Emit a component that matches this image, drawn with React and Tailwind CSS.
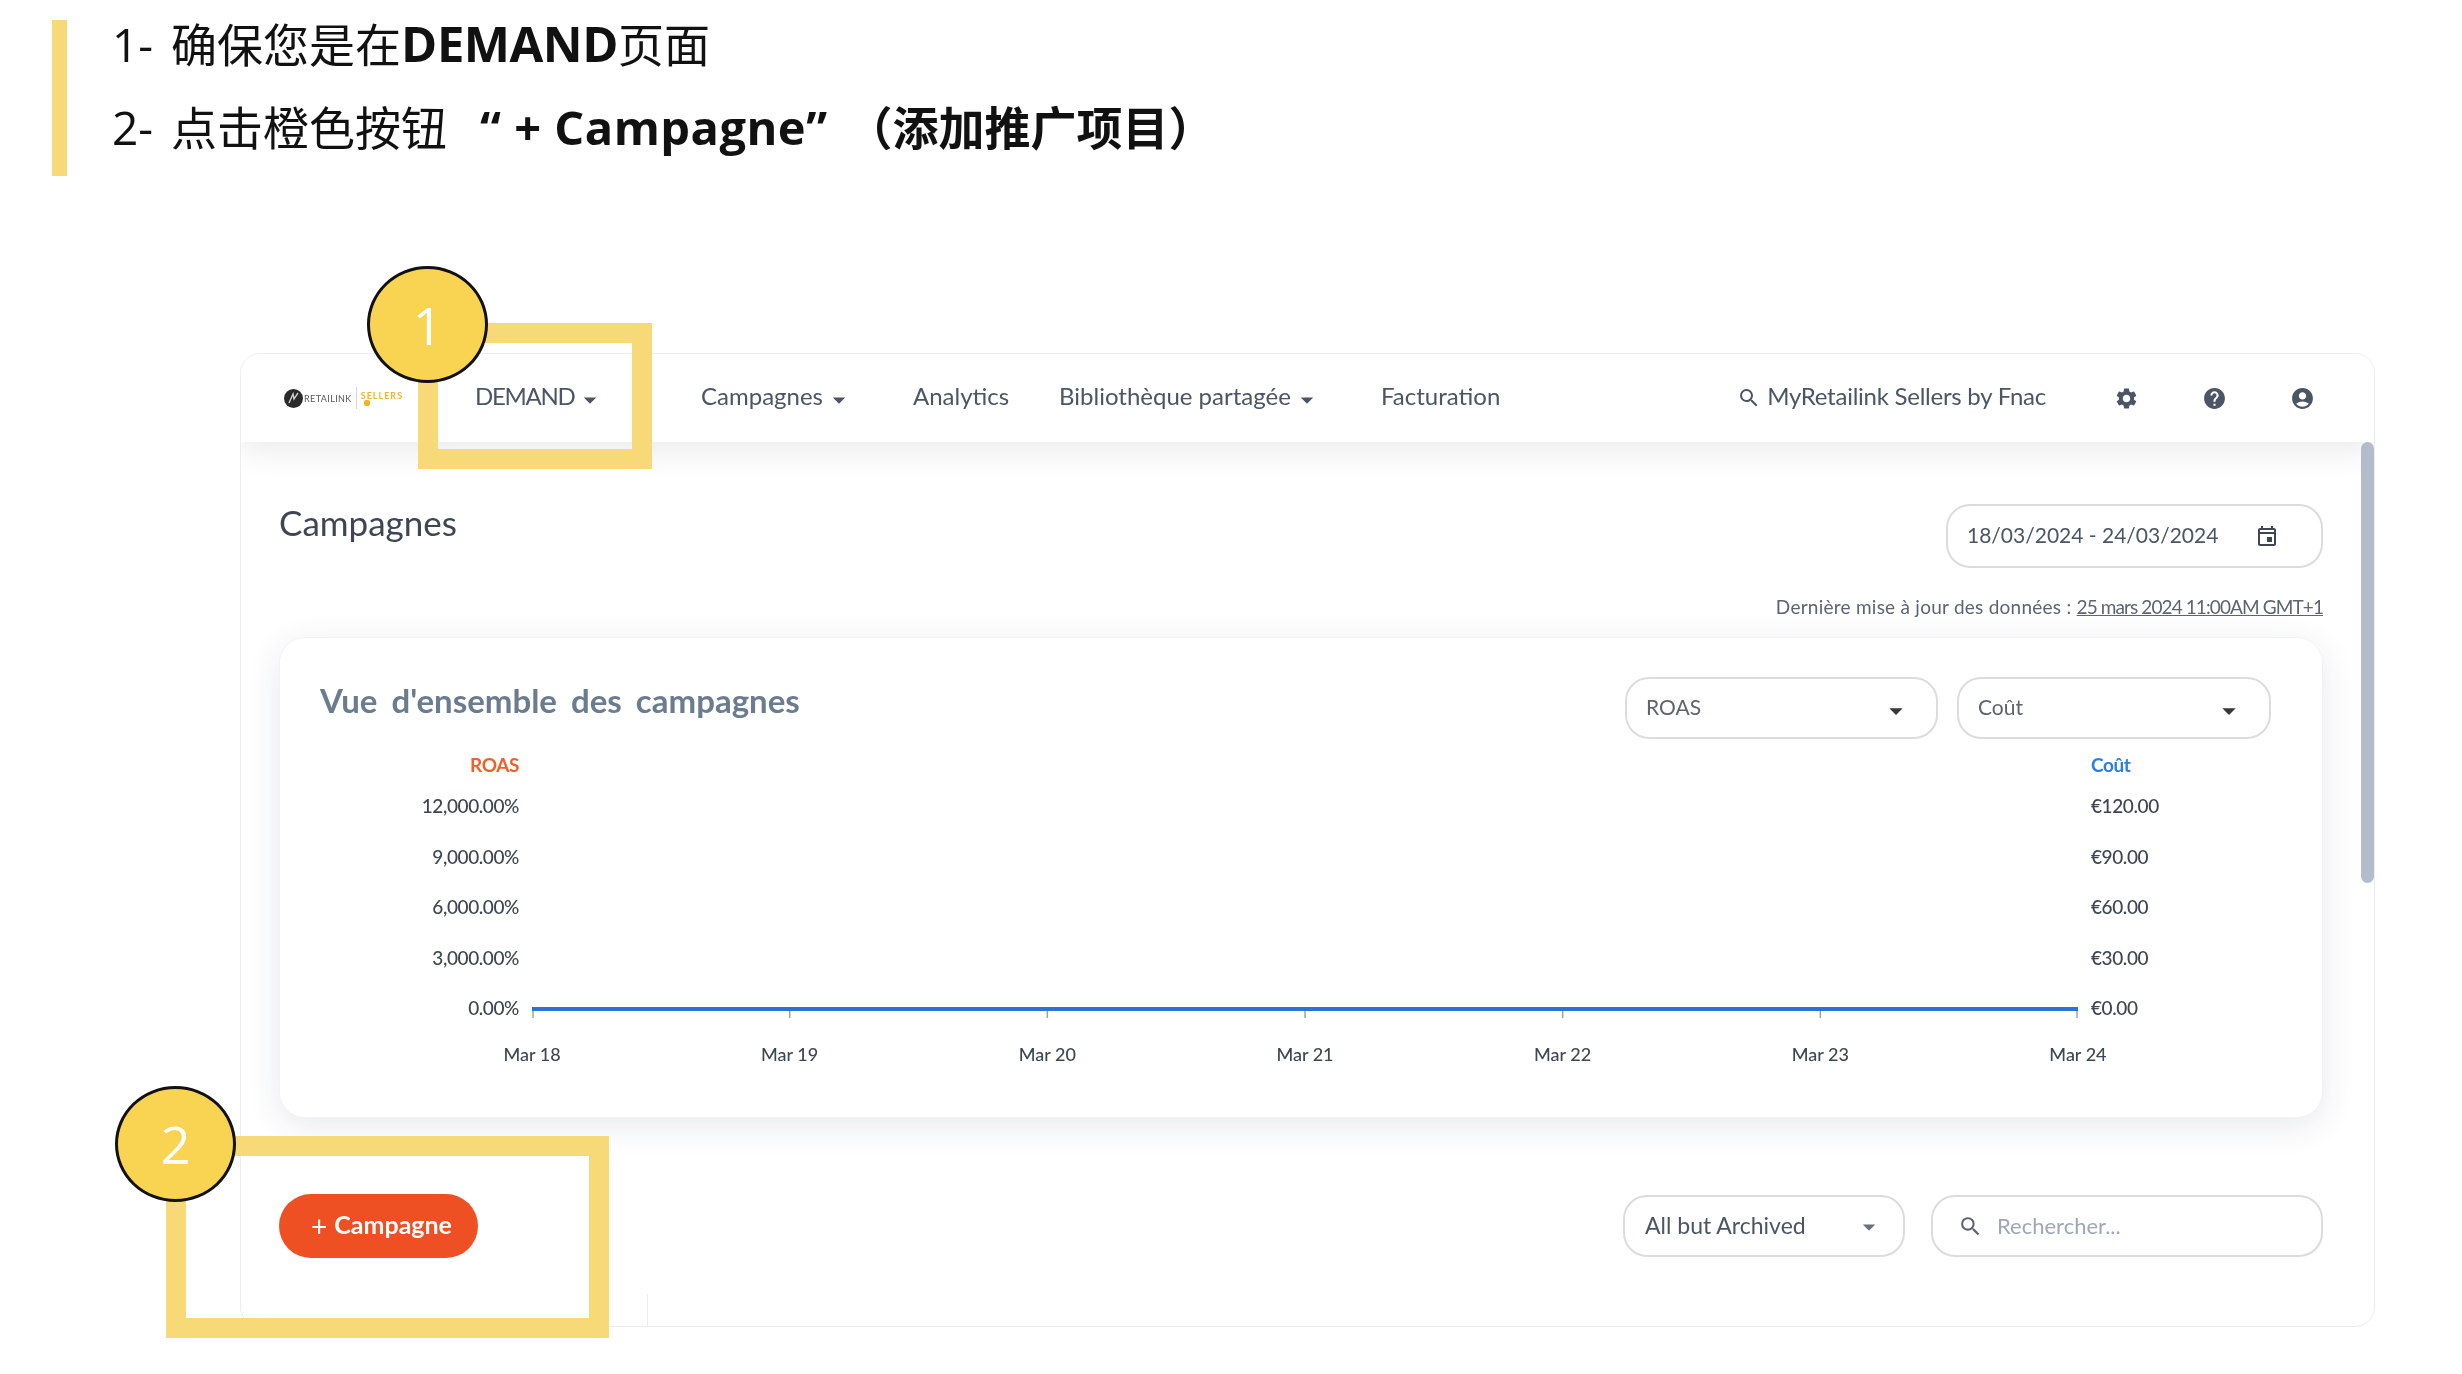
import React from 'react';
import { MdArrowDropDown, MdSearch, MdSettings, MdHelp, MdAccountCircle, MdOutlineEvent } from 'react-icons/md';

const leftTicks = ['12,000.00%', '9,000.00%', '6,000.00%', '3,000.00%', '0.00%'];
const rightTicks = ['€120.00', '€90.00', '€60.00', '€30.00', '€0.00'];
const days = ['Mar 18', 'Mar 19', 'Mar 20', 'Mar 21', 'Mar 22', 'Mar 23', 'Mar 24'];

const NavItem = ({ label, width, caret, tight }) => (
  <div className={`${width} flex items-center shrink-0 text-[24px] text-[#4b5563] ${tight ? 'tracking-[-1.3px]' : ''}`}>
    <span className="pb-[4px]">{label}</span>
    {caret && <MdArrowDropDown size={30} className="text-[#4b5563] ml-[1px] mt-[3px]" />}
  </div>
);

const Logo = () => (
  <div className="w-[124px] h-[24px] flex items-center shrink-0">
    <svg width="19" height="19" viewBox="0 0 19 19" className="shrink-0">
      <circle cx="9.5" cy="9.5" r="9.5" fill="#2a2a2a" />
      <path d="M5 14 L9 5 L10 10 L14 4" stroke="#cfcfcf" strokeWidth="1.4" fill="none" />
    </svg>
    <span className="ml-[1px] text-[9px] leading-none text-[#555] tracking-[0.4px]">RETAILINK</span>
    <div className="w-px h-[22px] bg-[#d8d8d8] mx-[4px]" />
    <div className="flex flex-col items-center">
      <span className="text-[9px] leading-none font-bold text-[#f0b429] tracking-[1px]">SELLERS</span>
      <span className="w-[6px] h-[6px] bg-[#f0b429] rounded-[2px] self-start ml-[3px]" />
    </div>
  </div>
);

const Select = ({ label, width }) => (
  <div className={`${width} h-[62px] rounded-[24px] border-2 border-[#dcdcdc] bg-white flex items-center justify-between pl-[19px] pr-[24px] text-[21px] text-[#5d6470]`}>
    <span className="pb-[2px]">{label}</span>
    <MdArrowDropDown size={32} className="text-[#33383f] mt-[6px]" />
  </div>
);

const App = () => {
  return (
    <div className="relative w-[2462px] h-[1374px] overflow-hidden bg-white font-['Lato',sans-serif] blur-[0.6px]">
      {/* Instructions */}
      <div className="flex h-[156px] ml-[52px] mt-[20px] text-[46px] text-[#111] font-['Open_Sans','Noto_Sans_CJK_SC',sans-serif]">
        <div className="w-[15px] h-full bg-[#f8d977]" />
        <div className="pl-[45px] flex flex-col">
          <div className="h-[54px] leading-[46px] whitespace-nowrap">
            1-<span className="ml-[18px]">确保您是在</span><b className="font-bold text-[49px] tracking-[-0.5px]">DEMAND</b>页面
          </div>
          <div className="mt-[29px] h-[54px] leading-[48px] whitespace-nowrap">
            2-<span className="ml-[18px]">点击橙色按钮</span>
            <b className="font-bold ml-[33px] text-[47px] tracking-[0.5px]">“ + Campagne”</b>
            <b className="font-bold ml-[42px]">（添加推广项目）</b>
          </div>
        </div>
      </div>

      {/* App window */}
      <div className="ml-[240px] mt-[177px] w-[2135px] h-[974px] rounded-[20px] border border-[#ececf1] bg-white overflow-hidden relative">
        <div className="relative z-10 h-[88px] bg-white flex items-center pl-[43px] pr-[28px] shadow-[0_8px_34px_rgba(0,0,0,0.09)]">
          <Logo />
          <div className="w-[67px] shrink-0" />
          <NavItem label="DEMAND" width="w-[226px]" caret tight />
          <NavItem label="Campagnes" width="w-[212px]" caret />
          <NavItem label="Analytics" width="w-[146px]" />
          <NavItem label="Bibliothèque partagée" width="w-[322px]" caret />
          <NavItem label="Facturation" width="w-[120px]" />
          <div className="ml-auto flex items-center text-[24px] text-[#4b5563]">
            <MdSearch size={24} className="mr-[6px]" />
            <span className="pb-[4px] tracking-[-0.25px]">MyRetailink Sellers by Fnac</span>
            <div className="ml-[36px] w-[88px] flex justify-center"><MdSettings size={25} /></div>
            <div className="w-[88px] flex justify-center"><MdHelp size={25} /></div>
            <div className="w-[88px] flex justify-center"><MdAccountCircle size={25} /></div>
          </div>
        </div>

        {/* Scrollbar */}
        <div className="absolute right-0 top-[88px] w-[13px] h-[441px] rounded-full bg-[#b3bccb] z-20" />

        <div className="pl-[38px] pt-[62px] w-[2082px]">
          <div className="flex justify-between items-start">
            <div className="text-[35px] leading-[36px] text-[#3f4651]">Campagnes</div>
            <div className="w-[377px] h-[64px] rounded-[24px] border-2 border-[#dcdcdc] flex items-center pl-[19px] text-[21px] text-[#4b5563]">
              <span className="w-[288px] pb-[2px]">18/03/2024 - 24/03/2024</span>
              <MdOutlineEvent size={24} className="text-[#3f4651]" />
            </div>
          </div>

          <div className="mt-[26px] h-[26px] leading-[26px] text-right text-[19px] text-[#5d6470] tracking-[0.25px]">
            Dernière mise à jour des données : <span className="underline tracking-[-0.9px]">25 mars 2024 11:00AM GMT+1</span>
          </div>

          {/* Overview card */}
          <div className="mt-[17px] h-[481px] rounded-[26px] border border-[#f2f2f6] bg-white pl-[40px] pr-[51px] pt-[39px] shadow-[0_8px_34px_rgba(30,40,80,0.1)]">
            <div className="flex items-start justify-between">
              <div className="text-[33px] leading-[46px] font-bold text-[#6b7c8f] [word-spacing:6px]">Vue d'ensemble des campagnes</div>
              <div className="flex gap-[19px]">
                <Select label="ROAS" width="w-[313px]" />
                <Select label="Coût" width="w-[314px]" />
              </div>
            </div>

            <div className="mt-[14px] flex">
              <div className="w-[199px] flex flex-col items-end text-[19px] leading-[24px] text-[#3f4651] font-medium tracking-[-0.4px]">
                <div className="font-bold text-[#f0602a]">ROAS</div>
                <div className="mt-[17px] flex flex-col items-end gap-[26.5px]">
                  {leftTicks.map(t => <div key={t}>{t}</div>)}
                </div>
              </div>
              <div className="w-[1546px] mx-[13px] flex items-end">
                <svg width="1546" height="15" viewBox="0 0 1546 15" className="-mb-[2px]">
                  {days.map((d, i) => (
                    <line key={d} x1={i === 6 ? 1545 : i === 0 ? 1 : i * 257.67} x2={i === 6 ? 1545 : i === 0 ? 1 : i * 257.67} y1="2" y2="11" stroke="#9aa3ad" strokeWidth="1.5" />
                  ))}
                  <line x1="0" x2="1546" y1="2" y2="2" stroke="#2f6fd6" strokeWidth="4" />
                </svg>
              </div>
              <div className="flex flex-col text-[19px] leading-[24px] text-[#3f4651] font-medium tracking-[-0.4px]">
                <div className="font-bold text-[#2a7de1]">Coût</div>
                <div className="mt-[17px] flex flex-col gap-[26.5px]">
                  {rightTicks.map(t => <div key={t}>{t}</div>)}
                </div>
              </div>
            </div>

            <div className="mt-[22px] ml-[212px] w-[1546px] flex justify-between text-[18px] leading-[24px] font-medium text-[#3f4651]">
              {days.map(d => (
                <div key={d} className="w-0 flex justify-center whitespace-nowrap">{d}</div>
              ))}
            </div>
          </div>

          {/* Actions */}
          <div className="mt-[76px] flex items-center">
            <button className="w-[199px] h-[64px] rounded-full bg-[#ee5023] text-white text-[25px] font-bold flex items-center justify-center pl-[6px]">
              <span className="font-normal text-[28px] leading-none mr-[7px]">+</span><span className="pb-[2px]">Campagne</span>
            </button>
            <div className="ml-auto w-[282px] h-[62px] rounded-[24px] border-2 border-[#dcdcdc] flex items-center justify-between pl-[20px] pr-[19px] text-[23px] text-[#4b5563]">
              <span className="pb-[2px]">All but Archived</span>
              <MdArrowDropDown size={30} className="text-[#6b7280] mt-[2px]" />
            </div>
            <div className="ml-[26px] w-[392px] h-[62px] rounded-[24px] border-2 border-[#dcdcdc] flex items-center pl-[25px] text-[22px] text-[#a0a6b4]">
              <MdSearch size={25} className="text-[#5d6470] mr-[14px]" />
              <span className="pb-[2px]">Rechercher...</span>
            </div>
          </div>
        </div>

        {/* Table column edge, just showing at the bottom */}
        <div className="absolute left-[406px] bottom-0 w-px h-[32px] bg-[#ececf1]" />
      </div>

      {/* Annotation 1 */}
      <div className="absolute left-[418px] top-[323px] w-[234px] h-[146px] border-[20px] border-[#f8d977] z-30" />
      <div className="absolute left-[367px] top-[266px] w-[121px] h-[117px] rounded-[50%] border-[3px] border-[#111] bg-[#f8d452] z-40 flex items-center justify-center text-white text-[52px] font-['Open_Sans',sans-serif]">1</div>

      {/* Annotation 2 */}
      <div className="absolute left-[166px] top-[1136px] w-[443px] h-[202px] border-[20px] border-[#f8d977] z-30" />
      <div className="absolute left-[115px] top-[1086px] w-[121px] h-[116px] rounded-[50%] border-[3px] border-[#111] bg-[#f8d452] z-40 flex items-center justify-center text-white text-[52px] font-['Open_Sans',sans-serif]">2</div>
    </div>
  );
};

export default App;
